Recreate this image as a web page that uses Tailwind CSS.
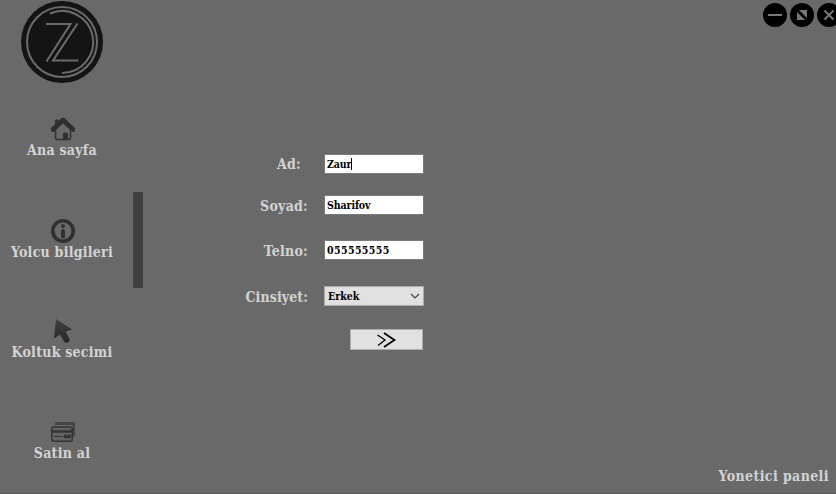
<!DOCTYPE html>
<html lang="tr">
<head>
<meta charset="utf-8">
<title>Yolcu bilgileri</title>
<script src="https://cdn.jsdelivr.net/npm/@tailwindcss/browser@4"></script>
</head>
<body class="w-[836px] h-[494px] overflow-hidden bg-[#696969] font-['DejaVu_Serif_Condensed','DejaVu_Serif',serif] font-bold text-[14px] leading-[18px] tracking-[0.25px] text-[#d3d3d3]">
<div class="flex h-[494px] w-[836px] overflow-hidden border-b border-[#5d5b5d]">
  <aside class="flex w-[143px] shrink-0 flex-col">
    <svg class="ml-5 mt-px h-[83px] w-[83px] shrink-0" viewBox="0 0 83 83" fill="none">
      <circle cx="42" cy="41" r="41" fill="#141414"/>
      <g stroke="#6b6b6b" stroke-width="2">
        <circle cx="42" cy="41" r="35"/>
        <path d="M30 12.5A31 31 0 1 1 42 72"/>
        <path d="M26 23H50.500L26.500 60.500M57.500 22.500L33 59.500H58.500"/>
      </g>
    </svg>
    <nav class="flex flex-col text-center whitespace-nowrap">
      <a class="mt-[33px] flex h-[42px] w-[124px] flex-col items-center">
        <svg class="ml-0.5 h-6 w-6 shrink-0" viewBox="0 0 24 24" fill="none">
          <path d="M4.500 11V20.500Q4.500 22.500 6.500 22.500H17.500Q19.500 22.500 19.500 20.500V11" stroke="#303030" stroke-width="1.500"/>
          <path d="M4 8V3.500Q4 2.500 5 2.500H7Q8 2.500 8 3.500V5Z" fill="#303030"/>
          <path d="M2 12.500L12 3L22 12.500" stroke="#303030" stroke-width="4.800" stroke-linecap="round" stroke-linejoin="round"/>
          <path d="M12 22.500V17Q12 15.500 13.500 15.500H15.500Q17 15.500 17 17V22.500Z" fill="#303030"/>
        </svg>
        <span>Ana sayfa</span>
      </a>
      <div class="mt-[33px] flex h-24 items-start">
        <a class="mt-[27px] flex h-[42px] w-[124px] flex-col items-center">
          <svg class="ml-0.5 h-6 w-6 shrink-0" viewBox="0 0 24 24" fill="none">
            <circle cx="12" cy="12" r="10.200" stroke="#303030" stroke-width="3.600"/>
            <circle cx="12" cy="7" r="2" fill="#303030"/>
            <rect x="10" y="10.200" width="4" height="9" rx="1.500" fill="#303030"/>
          </svg>
          <span>Yolcu bilgileri</span>
        </a>
        <div class="ml-[9px] h-24 w-2.5 bg-[#404040]"></div>
      </div>
      <a class="mt-[31px] flex h-[42px] w-[124px] flex-col items-center">
        <svg class="ml-0.5 h-6 w-6 shrink-0" viewBox="0 0 24 24">
          <defs><linearGradient id="cursor" x2="0" y2="1"><stop stop-color="#414141"/><stop offset="1" stop-color="#262626"/></linearGradient></defs>
          <path d="M5 0L21 10.500L14.700 12.700L18.700 20.500Q19 22 17.500 23L15.500 24Q14 24 13.500 23L9 15.500L3 19.500Z" fill="url(#cursor)"/>
        </svg>
        <span>Koltuk secimi</span>
      </a>
      <a class="mt-[59px] flex h-[42px] w-[124px] flex-col items-center">
        <svg class="ml-0.5 h-6 w-6 shrink-0" viewBox="0 0 24 24" fill="none">
          <path d="M4 5V4Q4 2 6 2H22Q24 2 24 4V15Q24 17 22 17V7Q22 5 20 5Z" fill="#464444"/>
          <rect x=".75" y="7" width="20.500" height="14.200" rx="2" fill="#646363" stroke="#383333" stroke-width="1.500"/>
          <path d="M1 11.500H21" stroke="#383333" stroke-width="2.500"/>
          <path d="M3 16.500H11" stroke="#383333"/>
          <circle cx="14.500" cy="16.500" r="2.100" fill="#383333"/><circle cx="18" cy="16.500" r="2" fill="#383333"/>
        </svg>
        <span>Satin al</span>
      </a>
    </nav>
  </aside>
  <main class="flex flex-col pt-[154px] pl-[97px]">
    <form class="flex flex-col">
      <label class="flex h-5 items-center"><span class="mr-4 w-[68px] whitespace-nowrap pr-[7px] text-right">Ad:</span>
        <span class="flex h-5 w-[100px] items-center border border-[#7a7a7a] bg-white pl-0.5 text-[10.5px] tracking-[-0.1px] text-black"><span>Zaur</span><span class="h-3 w-px bg-black"></span></span></label>
      <label class="mt-[21px] flex h-5 items-center"><span class="mr-4 flex w-[68px] justify-end whitespace-nowrap pt-0.5">Soyad:</span>
        <span class="flex h-5 w-[100px] items-center border border-[#7a7a7a] bg-white pl-0.5 text-[10.5px] tracking-[-0.1px] text-black">Sharifov</span></label>
      <label class="mt-[25px] flex h-5 items-center"><span class="mr-4 flex w-[68px] justify-end whitespace-nowrap pt-0.5">Telno:</span>
        <span class="flex h-5 w-[100px] items-center border border-[#7a7a7a] bg-white pl-0.5 text-[10.5px] tracking-[0.4px] text-black">055555555</span></label>
      <label class="mt-[26px] flex h-5 items-center"><span class="mr-4 flex w-[68px] justify-end whitespace-nowrap pt-0.5 tracking-[0.1px]">Cinsiyet:</span>
        <span class="flex h-5 w-[100px] items-center justify-between border border-[#adadad] bg-[#e1e1e1] pl-[3px] pr-[3px] text-[10.5px] tracking-[0px] text-black">Erkek
          <svg class="h-2 w-2.5" viewBox="0 0 10 8" fill="none"><path d="M1 2L5 6L9 2" stroke="#444" stroke-width="1.200"/></svg></span></label>
      <button type="button" class="mt-[23px] ml-[110px] flex h-[21px] w-[73px] items-center justify-center border border-[#adadad] bg-[#e1e1e1]">
        <svg class="mr-0.5 h-4 w-5" viewBox="0 0 20 16" fill="none" stroke="#000"><path d="M1.500 3L9 8L2 13.500" stroke-width="1.300"/><path d="M8 1L18.500 8L8 15" stroke-width="1.800"/></svg>
      </button>
    </form>
  </main>
  <div class="ml-auto flex w-[130px] flex-col items-end justify-between">
    <div class="-mr-[5px] mt-[3px] flex gap-[3px]">
      <svg class="h-6 w-6" viewBox="0 0 24 24"><circle cx="12" cy="12" r="12"/><path d="M5 12H19" stroke="#787878" stroke-width="2"/></svg>
      <svg class="h-6 w-6" viewBox="0 0 24 24"><circle cx="12" cy="12" r="12"/><path d="M9 7H17V15ZM7 9V17H15Z" fill="#787878"/></svg>
      <svg class="h-6 w-6" viewBox="0 0 24 24"><circle cx="12" cy="12" r="12"/><path d="M7.500 7.500L16.500 16.500M16.500 7.500L7.500 16.500" stroke="#787878" stroke-width="2"/></svg>
    </div>
    <a class="mr-[7px] mb-2 whitespace-nowrap tracking-[0.4px]">Yonetici paneli</a>
  </div>
</div>
</body>
</html>
